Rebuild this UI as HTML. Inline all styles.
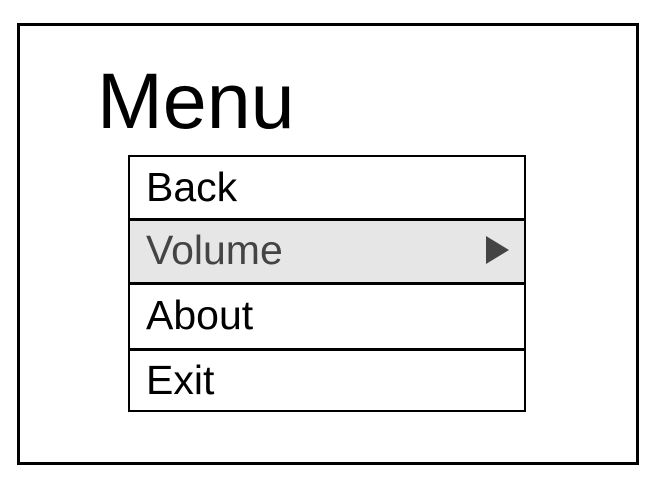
<!DOCTYPE html>
<html><head><style>
body{margin:0;width:664px;height:486px;background:#fff;position:relative;font-family:"Liberation Sans",Arial,sans-serif;overflow:hidden}
.o{position:absolute;left:17px;top:23px;width:616px;height:436px;border:3px solid #000}
.t{position:absolute;left:97px;top:56px;font-size:79px;line-height:90px}
.box{position:absolute;left:128px;top:155px;width:394px;height:253px;border:2px solid #000}
.r{position:absolute;left:0;width:394px;font-size:41px}
.r span{position:absolute;left:16px}
.l{position:absolute;left:0;width:394px;height:3px;background:#000}
</style></head><body>
<div class="o"></div>
<div class="t">Menu</div>
<div class="box">
<div class="r" style="top:0;height:61px"><span style="top:7px">Back</span></div>
<div class="r" style="top:64px;height:61px;background:#e6e6e6;color:#444"><span style="top:6px">Volume</span>
<svg style="position:absolute;left:354px;top:13px" width="26" height="32"><polygon points="2,2 25,16 2,30" fill="#444"/></svg></div>
<div class="r" style="top:128px;height:63px"><span style="top:7px">About</span></div>
<div class="r" style="top:194px;height:59px"><span style="top:6px">Exit</span></div>
<div class="l" style="top:61px"></div>
<div class="l" style="top:125px"></div>
<div class="l" style="top:191px"></div>
</div>
</body></html>
